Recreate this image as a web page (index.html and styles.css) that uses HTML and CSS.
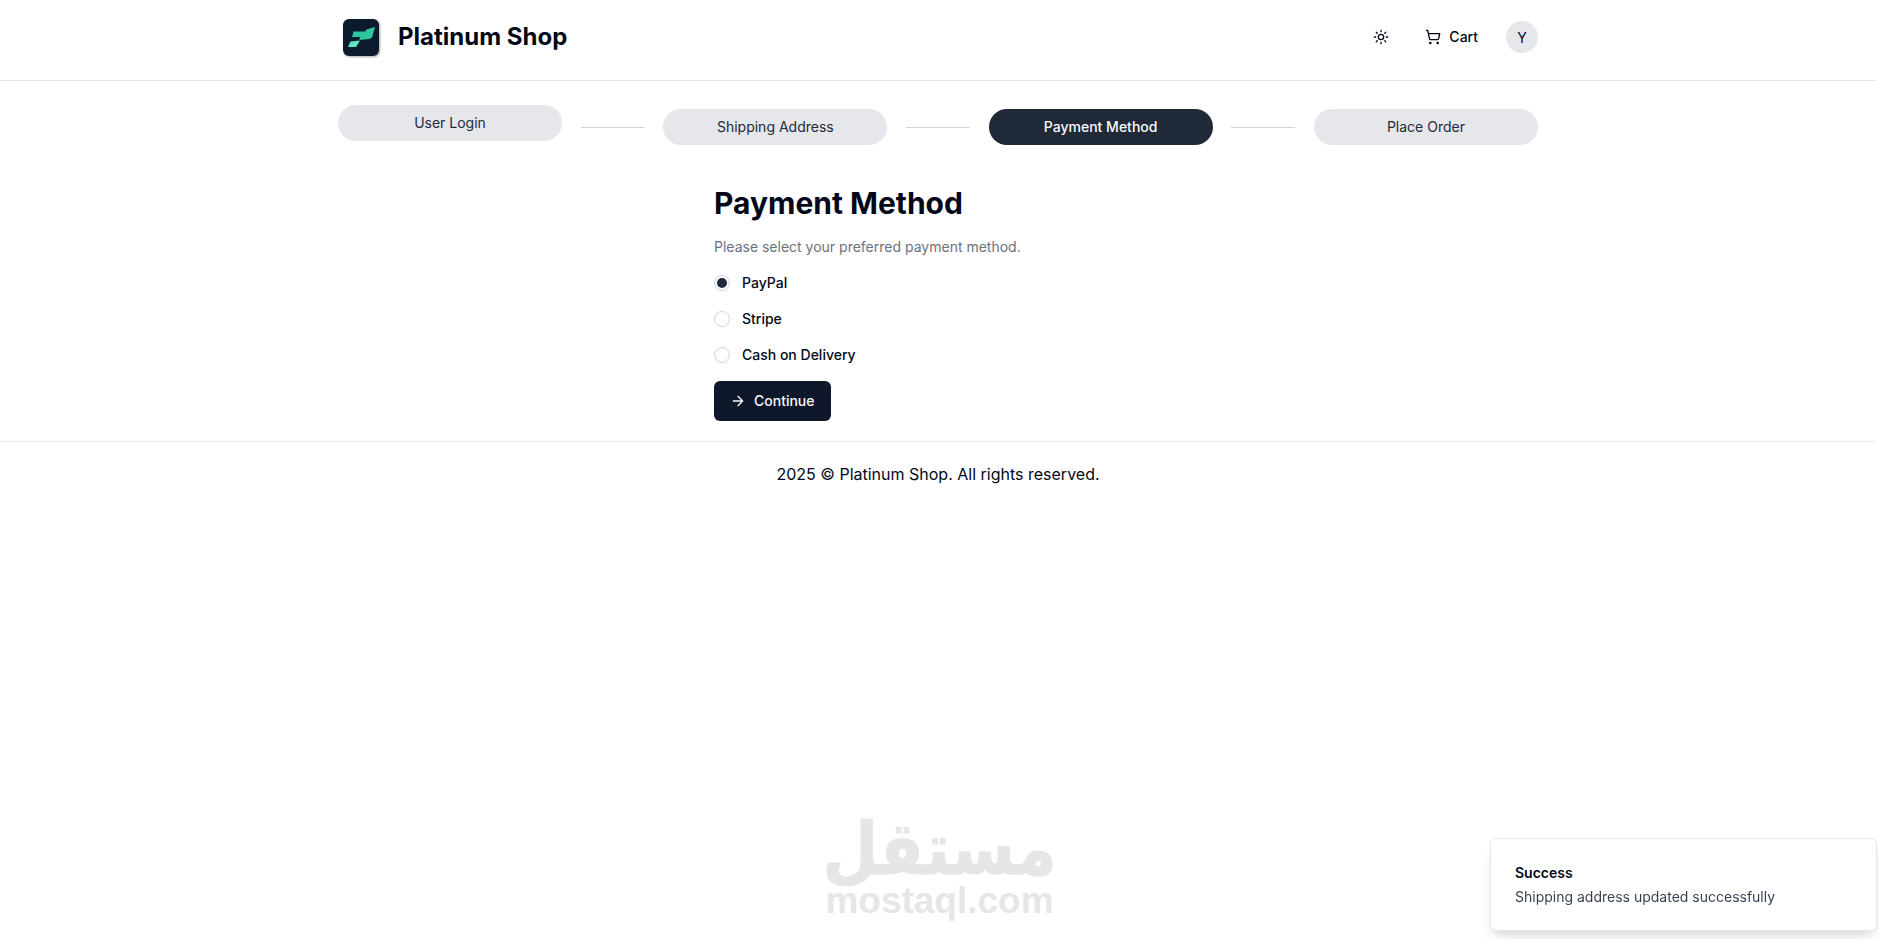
FILE: index.html
```html
<!DOCTYPE html>
<html lang="en">
<head>
<meta charset="utf-8">
<title>Payment Method - Platinum Shop</title>
<link rel="stylesheet" href="styles.css">
</head>
<body>
<div class="page">
  <header class="header">
    <div class="header-inner">
      <a class="brand">
        <svg class="logo" width="40" height="40" viewBox="0 0 40 40" aria-hidden="true">
          <rect x="1" y="2" width="36" height="37" rx="6" fill="#0b1a2c"/>
          <path d="M11.500 14.500 L23 14.500 L24.500 12.500 L33 10 L30 20.500 L27.500 22 L17 23 L18.500 20 L10 20 Z" fill="#2cc79f"/>
          <path d="M8.500 24.500 L18 23.500 L14 30 L6 30 Z" fill="#5de8c0"/>
        </svg>
        <span class="brand-name">Platinum Shop</span>
      </a>
      <nav class="nav">
        <span class="nav-icon">
          <svg width="16" height="16" viewBox="0 0 24 24" fill="none" stroke="#020817" stroke-width="2" stroke-linecap="round" stroke-linejoin="round" aria-hidden="true"><circle cx="12" cy="12" r="4"/><path d="M12 2v2M12 20v2M4.900 4.900l1.400 1.400M17.700 17.700l1.400 1.400M2 12h2M20 12h2M6.300 17.700l-1.400 1.400M19.100 4.900l-1.400 1.400"/></svg>
        </span>
        <span class="cart">
          <svg width="16" height="16" viewBox="0 0 24 24" fill="none" stroke="#020817" stroke-width="2" stroke-linecap="round" stroke-linejoin="round" aria-hidden="true"><circle cx="8" cy="21" r="1"/><circle cx="19" cy="21" r="1"/><path d="M2.050 2.050h2l2.660 12.420a2 2 0 0 0 2 1.580h9.780a2 2 0 0 0 1.950-1.570l1.650-7.430H5.120"/></svg>
          <span class="lift">Cart</span>
        </span>
        <span class="avatar">Y</span>
      </nav>
    </div>
  </header>

  <main class="main">
    <div class="steps">
      <div class="step step-first"><span class="pill">User Login</span></div>
      <span class="sep"></span>
      <div class="step"><span class="pill">Shipping Address</span></div>
      <span class="sep"></span>
      <div class="step"><span class="pill pill-active">Payment Method</span></div>
      <span class="sep"></span>
      <div class="step"><span class="pill">Place Order</span></div>
    </div>

    <form class="form">
      <h1 class="title">Payment Method</h1>
      <p class="hint">Please select your preferred payment method.</p>
      <div class="options">
        <label class="option"><span class="radio radio-on"></span><span class="lift">PayPal</span></label>
        <label class="option"><span class="radio"></span><span class="lift">Stripe</span></label>
        <label class="option"><span class="radio"></span><span class="lift">Cash on Delivery</span></label>
      </div>
      <button class="btn" type="button">
        <svg width="16" height="16" viewBox="0 0 24 24" fill="none" stroke="#f8fafc" stroke-width="2" stroke-linecap="round" stroke-linejoin="round" aria-hidden="true"><path d="M5 12h14M12 5l7 7-7 7"/></svg>
        <span class="lift">Continue</span>
      </button>
    </form>
  </main>

  <footer class="footer">2025 © Platinum Shop. All rights reserved.</footer>
</div>

<div class="watermark">
  <span class="wm-ar" lang="ar" dir="rtl">مستقل</span>
  <span class="wm-en">mostaql.com</span>
</div>

<div class="toast">
  <div class="toast-title">Success</div>
  <div class="toast-text">Shipping address updated successfully</div>
</div>
</body>
</html>
```
FILE: styles.css
```css
* { box-sizing: border-box; }
html, body { margin: 0; padding: 0; background: #fff; }
body {
  font-family: Inter, "Liberation Sans", sans-serif;
  color: #020817;
  height: 939px;
  overflow: hidden;
  position: relative;
}
.page { width: 1876px; }
.lift { padding-bottom: 2px; }
.header { height: 81px; border-bottom: 1px solid #e2e8f0; }
.header-inner {
  width: 1200px;
  height: 74px;
  margin: 0 auto;
  display: flex;
  align-items: center;
  justify-content: space-between;
}
.brand { display: flex; align-items: center; gap: 16px; padding-left: 4px; }
.logo { display: block; filter: drop-shadow(1px 1px 1px rgba(0,0,0,.35)); }
.brand-name { font-size: 24px; line-height: 32px; font-weight: 700; }
.nav { display: flex; align-items: center; font-size: 14px; font-weight: 500; }
.nav-icon { width: 40px; height: 40px; display: flex; align-items: center; justify-content: center; margin-right: 12px; }
.cart { display: flex; align-items: center; gap: 8px; padding: 0 12px; height: 40px; margin-right: 16px; }
.avatar { width: 32px; height: 32px; border-radius: 50%; background: #e5e7eb; display: flex; align-items: center; justify-content: center; font-weight: 400; }
.main { width: 1200px; margin: 0 auto; }
.steps { display: flex; align-items: flex-end; justify-content: space-between; height: 64px; font-size: 14px; }
.step { width: 224px; }
.step-first { margin-bottom: 4px; }
.pill {
  display: flex;
  align-items: center;
  justify-content: center;
  height: 36px;
  padding-bottom: 2px;
  border-radius: 18px;
  background: #e5e7eb;
  color: #1e293b;
}
.pill-active { background: #1f2937; color: #f8fafc; font-weight: 500; }
.sep { width: 64px; height: 1px; background: #d1d5db; margin-bottom: 17px; }
.form { width: 448px; margin: 40px auto 0; }
.title { margin: 0; font-size: 30px; line-height: 36px; font-weight: 700; }
.hint { margin: 16px 0 0; font-size: 14px; line-height: 20px; color: #6b7280; }
.options { margin-top: 8px; }
.option { display: flex; align-items: center; gap: 12px; height: 36px; font-size: 14px; font-weight: 500; }
.radio { width: 16px; height: 16px; border-radius: 50%; border: 1px solid #cbd5e1; display: block; position: relative; background: #fff; }
.radio-on::after { content: ""; position: absolute; inset: 2px; border-radius: 50%; background: #1e293b; }
.btn {
  display: inline-flex;
  align-items: center;
  gap: 8px;
  height: 40px;
  margin-top: 8px;
  padding: 0 16px;
  border: 0;
  border-radius: 6px;
  background: #0f172a;
  color: #f8fafc;
  font: 500 14px Inter, "Liberation Sans", sans-serif;
}
.footer { border-top: 1px solid #e2e8f0; margin-top: 20px; padding-top: 20px; text-align: center; font-size: 16px; line-height: 24px; }
.watermark {
  position: absolute;
  left: 50%;
  bottom: 20px;
  transform: translateX(-50%);
  display: flex;
  flex-direction: column;
  align-items: center;
  color: #e6e6e6;
  font-family: "DejaVu Sans", "Liberation Sans", sans-serif;
  font-weight: 700;
}
.wm-ar {
  font-size: 64px;
  line-height: 62px;
  transform: scaleY(1.14) translateY(-3px);
  -webkit-text-stroke: 1px #e6e6e6;
}
.wm-en { font-family: "Liberation Sans", sans-serif; font-size: 37px; line-height: 36px; }
.toast {
  position: absolute;
  right: 2px;
  bottom: 8px;
  width: 387px;
  height: 93px;
  padding: 24px;
  background: #fff;
  border: 1px solid #e2e8f0;
  border-radius: 6px;
  box-shadow: 0 10px 15px -3px rgba(0,0,0,.1), 0 4px 6px -4px rgba(0,0,0,.1);
  font-size: 14px;
  line-height: 20px;
}
.toast-title { font-weight: 600; }
.toast-text { margin-top: 4px; color: #1e293b; opacity: .9; }
```
